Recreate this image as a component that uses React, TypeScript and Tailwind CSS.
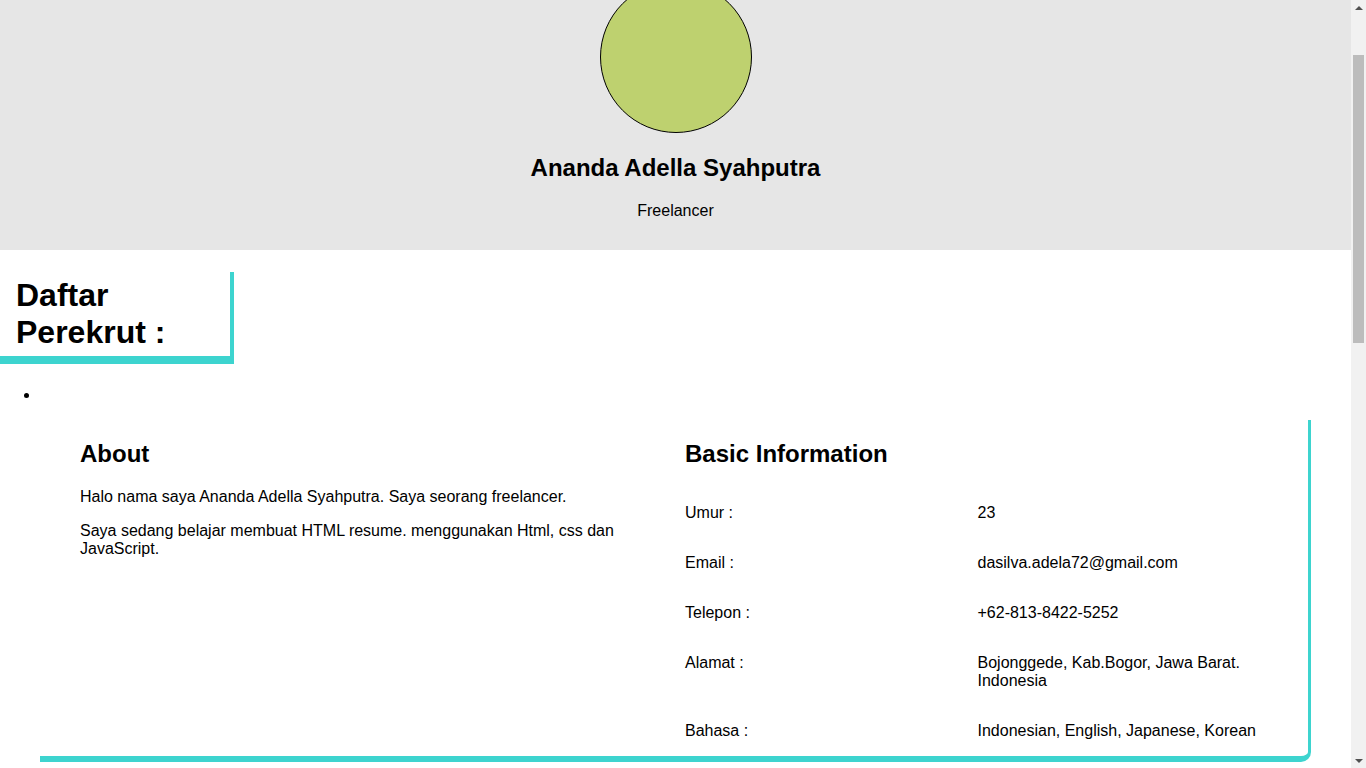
const info = [
  { label: "Umur :", value: "23" },
  { label: "Email :", value: "dasilva.adela72@gmail.com" },
  { label: "Telepon :", value: "+62-813-8422-5252" },
  { label: "Alamat :", value: "Bojonggede, Kab.Bogor, Jawa Barat. Indonesia" },
  { label: "Bahasa :", value: "Indonesian, English, Japanese, Korean" },
];

export default function App() {
  return (
    <div className="flex bg-white font-['Liberation_Sans',Arial,sans-serif] text-black">
      <main className="min-h-[1968px] w-[1351px] shrink-0">
        {/* header */}
        <header className="flex h-[250px] flex-col items-center bg-[#e6e6e6]">
          <div className="-mt-[19px] h-[152px] w-[152px] shrink-0 rounded-full border border-black bg-[#bed16f]" />
          <h1 className="mt-[21px] text-2xl font-bold leading-[28px]">
            Ananda Adella Syahputra
          </h1>
          <p className="mt-5 text-base leading-[18px]">Freelancer</p>
        </header>

        {/* recruiter title */}
        <div className="mt-[22px] w-[234px] border-r-4 border-b-8 border-[#3dd4cf] pt-[5px] pb-[5px] pl-4">
          <h2 className="text-[32px] font-bold leading-[37px]">Daftar Perekrut :</h2>
        </div>

        <ul className="mt-[22px] mb-4 list-disc pl-10 text-base leading-[18px]">
          <li>{"\u00a0"}</li>
        </ul>

        {/* resume card */}
        <section className="mr-10 ml-10 grid grid-cols-[585px_585px] gap-x-5 rounded-br-[10px] border-r-[3px] border-b-[6px] border-[#3dd4cf] pt-5 pr-[38px] pb-0 pl-10">
          <div>
            <h3 className="mb-5 text-2xl font-bold leading-[28px]">About</h3>
            <p className="mb-4 text-base leading-[18px]">
              Halo nama saya Ananda Adella Syahputra. Saya seorang freelancer.
            </p>
            <p className="text-base leading-[18px]">
              Saya sedang belajar membuat HTML resume. menggunakan Html, css dan JavaScript.
            </p>
          </div>

          <div>
            <h3 className="mb-5 text-2xl font-bold leading-[28px]">Basic Information</h3>
            <div>
              {info.map((row) => (
                <div key={row.label} className="grid grid-cols-2 py-4 text-base leading-[18px]">
                  <span>{row.label}</span>
                  <span>{row.value}</span>
                </div>
              ))}
            </div>
          </div>
        </section>
      </main>

      {/* page scrollbar as seen in the screenshot */}
      <aside className="sticky top-0 flex h-screen w-[15px] shrink-0 flex-col items-center bg-[#f1f1f1]">
        <div className="flex h-[15px] items-center justify-center">
          <div className="h-0 w-0 border-x-[4px] border-b-[4px] border-x-transparent border-b-[#505050]" />
        </div>
        <div className="mt-[40px] h-[288px] w-[11px] bg-[#bcbcbc]" />
        <div className="flex-1" />
        <div className="flex h-[15px] items-center justify-center">
          <div className="h-0 w-0 border-x-[4px] border-t-[4px] border-x-transparent border-t-[#505050]" />
        </div>
      </aside>
    </div>
  );
}
